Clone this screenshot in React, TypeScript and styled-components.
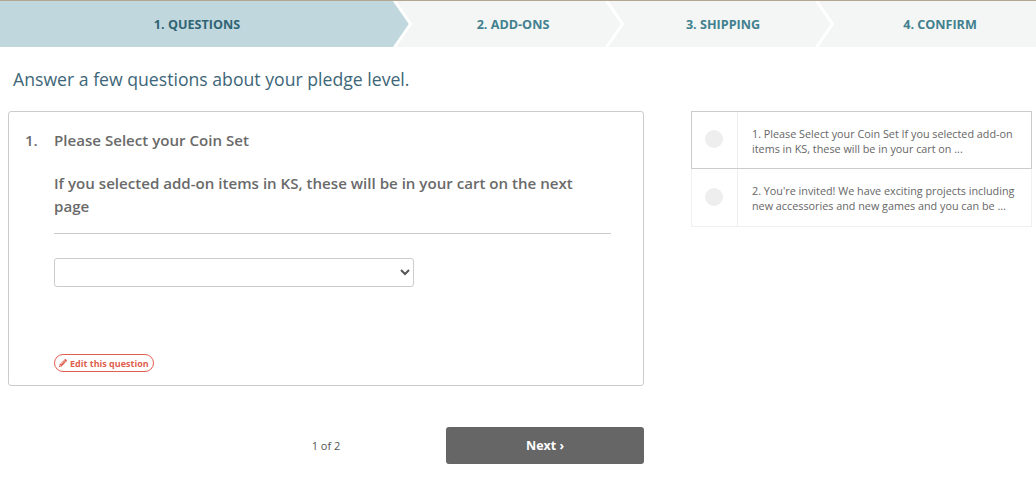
import React from 'react'
import styled, { createGlobalStyle } from 'styled-components'
import { FaPencilAlt } from 'react-icons/fa'

const steps = [
  { label: '1. QUESTIONS', width: 394, offset: 0, active: true },
  { label: '2. ADD-ONS', width: 212, offset: 26, active: false },
  { label: '3. SHIPPING', width: 210, offset: 24, active: false },
  { label: '4. CONFIRM', width: 220, offset: 28, active: false },
]

const sideItems = [
  '1. Please Select your Coin Set If you selected add-on items in KS, these will be in your cart on ...',
  "2. You're invited! We have exciting projects including new accessories and new games and you can be ...",
]

const App = () => {
  return (
    <Page>
      <GlobalStyle />
      <Stepper>
        {steps.map((step, i) => (
          <Step key={step.label} $width={step.width} $offset={step.offset} $active={step.active}>
            {step.label}
            {i < steps.length - 1 && (
              <Tip viewBox="0 0 19 46" aria-hidden="true">
                <polygon points="0,0 16,23 0,46" fill={step.active ? '#c1d7de' : '#f3f6f4'} />
                <polyline points="0,-1 16.5,23 0,47" fill="none" stroke="#fff" strokeWidth="3" />
              </Tip>
            )}
          </Step>
        ))}
      </Stepper>

      <Title>Answer a few questions about your pledge level.</Title>

      <Columns>
        <MainColumn>
          <Card>
            <QuestionRow>
              <QuestionNumber>1.</QuestionNumber>
              <QuestionBody>
                <QuestionTitle>Please Select your Coin Set</QuestionTitle>
                <QuestionText>If you selected add-on items in KS, these will be in your cart on the next page</QuestionText>
                <Divider />
                <Select aria-label="Coin set">
                  <option></option>
                </Select>
                <EditButton>
                  <FaPencilAlt size={8} />
                  Edit this question
                </EditButton>
              </QuestionBody>
            </QuestionRow>
          </Card>
          <Footer>
            <span />
            <Pager>1 of 2</Pager>
            <NextButton>Next ›</NextButton>
          </Footer>
        </MainColumn>

        <SideList>
          {sideItems.map((text, i) => (
            <SideItem key={text} $current={i === 0}>
              <SideMarker>
                <Dot />
              </SideMarker>
              <SideText>{text}</SideText>
            </SideItem>
          ))}
        </SideList>
      </Columns>
    </Page>
  )
}

export default App

const GlobalStyle = createGlobalStyle`
  html, body {
    margin: 0;
    padding: 0;
    background: #fff;
    font-family: 'Open Sans', 'Liberation Sans', sans-serif;
  }
`

const Page = styled('div')`
  width: 1036px;
  height: 477px;
  overflow: hidden;
  border-top: 1px solid #b5a78f;
  box-sizing: border-box;
`

const Stepper = styled('div')`
  display: flex;
  height: 46px;
`

const Step = styled('div')<{ $width: number; $offset: number; $active: boolean }>`
  position: relative;
  display: flex;
  align-items: center;
  justify-content: center;
  box-sizing: border-box;
  width: ${(p) => p.$width}px;
  padding-left: ${(p) => p.$offset}px;
  background: ${(p) => (p.$active ? '#c1d7de' : '#f3f6f4')};
  color: ${(p) => (p.$active ? '#2f6473' : '#42808f')};
  font-size: 12.6px;
  font-weight: 700;
`

const Tip = styled('svg')`
  position: absolute;
  top: 0;
  left: 100%;
  width: 19px;
  height: 46px;
  z-index: 1;
  overflow: visible;
`

const Title = styled('h1')`
  margin: 0;
  padding: 20px 0 0 13px;
  height: 43px;
  box-sizing: border-box;
  color: #3d6678;
  font-size: 17.65px;
  line-height: 25px;
  font-weight: 400;
`

const Columns = styled('div')`
  display: flex;
  align-items: flex-start;
  gap: 47px;
  padding: 21px 4px 0 8px;
`

const MainColumn = styled('div')`
  width: 636px;
  flex-shrink: 0;
`

const Card = styled('div')`
  box-sizing: border-box;
  height: 275px;
  padding: 17px 32px 0 16px;
  border: 1px solid #ccc;
  border-radius: 3px;
`

const QuestionRow = styled('div')`
  display: flex;
`

const QuestionNumber = styled('div')`
  width: 29px;
  flex-shrink: 0;
  color: #6a6a6a;
  font-size: 15px;
  line-height: 22px;
  font-weight: 600;
`

const QuestionBody = styled('div')`
  flex: 1;
  min-width: 0;
`

const QuestionTitle = styled('div')`
  color: #6a6a6a;
  font-size: 15.1px;
  line-height: 22px;
  font-weight: 600;
`

const QuestionText = styled('div')`
  max-width: 530px;
  margin-top: 21px;
  color: #6a6a6a;
  font-size: 15.1px;
  line-height: 23px;
  font-weight: 600;
`

const Divider = styled('div')`
  margin-top: 15px;
  border-top: 1px solid #ccc;
`

const Select = styled('select')`
  display: block;
  width: 360px;
  height: 29px;
  margin-top: 24px;
  border: 1px solid #ccc;
  border-radius: 3px;
  background: #fff;
  color: #555;
  font-family: inherit;
  font-size: 13px;
`

const EditButton = styled('button')`
  display: flex;
  align-items: center;
  gap: 3px;
  box-sizing: border-box;
  width: 100px;
  height: 18px;
  margin-top: 67px;
  padding: 0 0 0 4px;
  border: 1px solid #e0604f;
  border-radius: 9px;
  background: #fff;
  color: #e0604f;
  font-family: inherit;
  font-size: 9px;
  font-weight: 700;
  white-space: nowrap;
`

const Footer = styled('div')`
  display: grid;
  grid-template-columns: 198px 1fr 198px;
  align-items: center;
  margin-top: 41px;
`

const Pager = styled('div')`
  text-align: center;
  color: #555;
  font-size: 11px;
`

const NextButton = styled('button')`
  height: 37px;
  padding: 0 0 1px;
  border: 0;
  border-radius: 3px;
  background: #666;
  color: #fff;
  font-family: inherit;
  font-size: 12.5px;
  font-weight: 700;
`

const SideList = styled('div')`
  width: 341px;
  flex-shrink: 0;
`

const SideItem = styled('div')<{ $current: boolean }>`
  display: flex;
  box-sizing: border-box;
  height: 58px;
  border: 1px solid ${(p) => (p.$current ? '#ccc' : '#f0f0f0')};
  border-top-width: ${(p) => (p.$current ? '1px' : '0')};
`

const SideMarker = styled('div')`
  display: flex;
  align-items: center;
  justify-content: center;
  box-sizing: border-box;
  width: 46px;
  padding: 0 2px 2px 0;
  flex-shrink: 0;
  border-right: 1px solid #eee;
`

const Dot = styled('div')`
  width: 18px;
  height: 18px;
  border-radius: 50%;
  background: #eee;
`

const SideText = styled('div')`
  align-self: center;
  padding: 1px 14px 0;
  color: #666;
  font-size: 10.8px;
  line-height: 15px;
`
